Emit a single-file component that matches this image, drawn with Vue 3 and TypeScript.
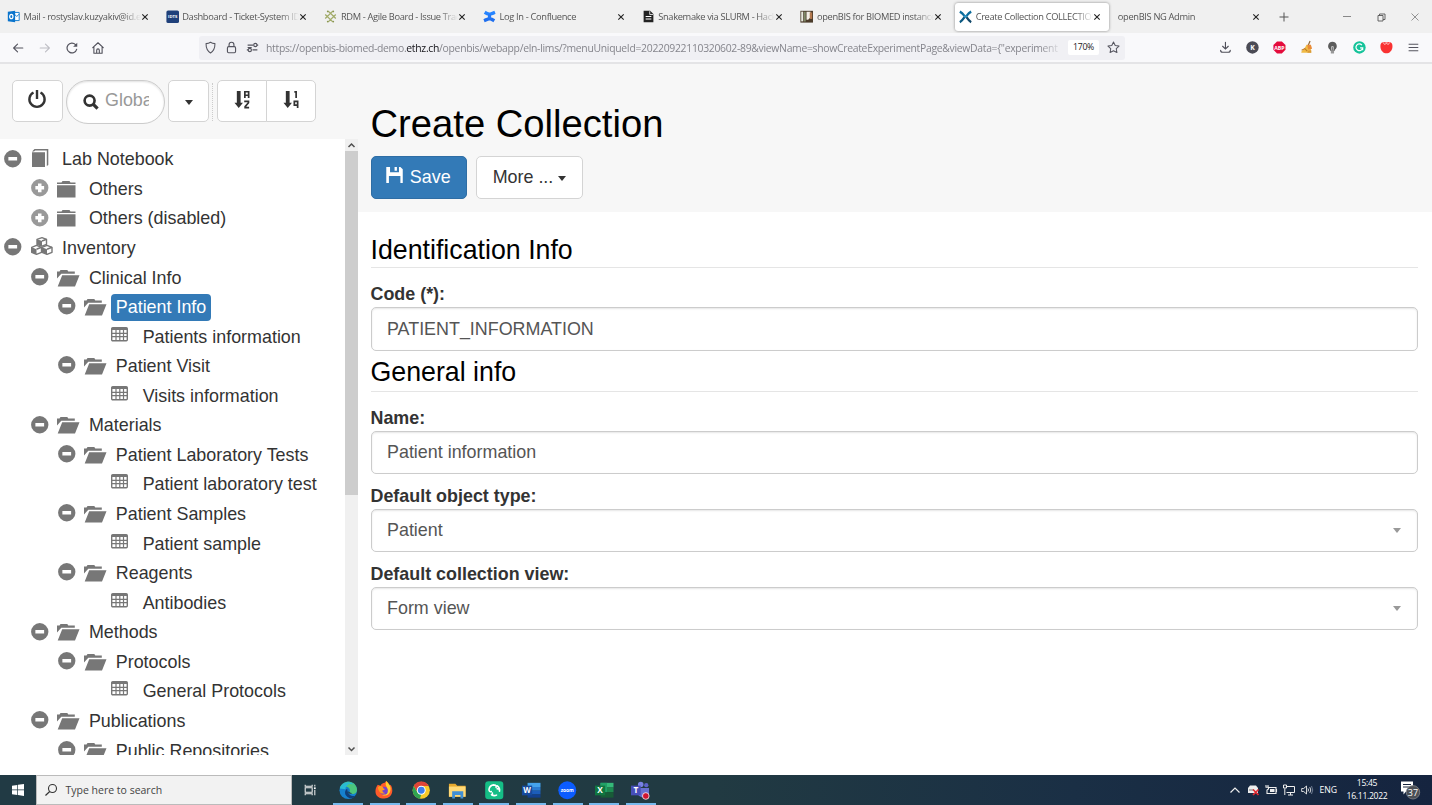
<script setup lang="ts">
interface Tab {
  title: string
  icon?: string
  active?: boolean
}

interface Node {
  label: string
  level: number
  toggle: 'minus' | 'plus' | ''
  icon: string
  selected?: boolean
}

const font = 'font-family="Open Sans" font-weight="700" text-anchor="middle"'

// Inner markup of each glyph, on the view box named with it.
const icons: Record<string, { box: string; body: string }> = {
  outlook: { box: '0 0 16 16', body: '<path d="M8 3h7v10H8z" fill="#fff" stroke="#1b7fd0" stroke-width="1.2"/><path d="M9 5l3 3 3-3" fill="none" stroke="#1b7fd0" stroke-width="1.2"/><path d="M1 2.3L10 1v14L1 13.7z" fill="#0a74cc"/><ellipse cx="5.3" cy="8" rx="2" ry="2.7" fill="none" stroke="#fff" stroke-width="1.5"/>' },
  idts: { box: '0 0 16 16', body: `<rect x=".5" y=".5" width="15.500" height="15.500" rx="2" fill="#1f407a"/><text x="8.300" y="10.300" ${font} font-size="5.200" fill="#fff">IDTS</text>` },
  rdm: { box: '0 0 16 16', body: '<g fill="none" stroke="#a1ab68" stroke-width="1.5"><path d="M8 4l4 4-4 4-4-4zM8 4L5.5 1.7M8 4l2.5-2.3M8 12l-2.5 2.3M8 12l2.5 2.3M4 8L1.5 5.5M4 8l-2.500 2.500M12 8l2.500-2.500M12 8l2.500 2.500"/></g><g fill="#8a9650"><circle cx="4.700" cy="1.700" r="1.200"/><circle cx="11.300" cy="1.700" r="1.200"/><circle cx="4.700" cy="14.300" r="1.200"/><circle cx="11.300" cy="14.300" r="1.200"/></g>' },
  confluence: { box: '0 0 16 16', body: '<path d="M1 4.500L3.200 1c3 2 4.500 2.500 6.300 1.700L14 1l1.500 3.500C9 8 5.500 7.500 1 4.500z" fill="#2684ff"/><path d="M15 11.500L12.800 15c-3-2-4.500-2.500-6.300-1.700L2 15 .5 11.500C7 8 10.500 8.500 15 11.500z" fill="#1f6fee"/><path d="M6 5.500h4v5H6z" fill="#2478f5"/>' },
  doc: { box: '0 0 16 16', body: '<path d="M2 1h8l4 4v10H2z" fill="#222"/><path d="M9.500 1.500V5.500h4" fill="none" stroke="#fff"/><path d="M4.500 8h7M4.500 11h7" stroke="#fff" stroke-width="1.300"/>' },
  photo: { box: '0 0 16 16', body: '<rect x=".5" y="1" width="15.500" height="14.500" fill="#4b3b2a"/><path d="M1.500 2H4v12H1.500z" fill="#e8eadf"/><path d="M5 2h2v12H5z" fill="#85906d"/><path d="M8 2h5v7l-3 3H8z" fill="#f3ede5"/><path d="M12 3h3v8h-3z" fill="#b3784e"/>' },
  openbis: { box: '0 0 16 16', body: '<g fill="none" stroke-width="2.800"><path d="M1 2c2 1 4 3 6 5.500M15 2c-2 1-4 3-6 5.500" stroke="#0f6e9d"/><path d="M1 15c2-1 4-3.500 6-6.500" stroke="#0c5a82"/><path d="M15 15c-2-1-4-3.500-6-6.500" stroke="#12496a"/></g><circle cx="8" cy="8" r="1.700" fill="#2894c5"/>' },
  close: { box: '0 0 8 8', body: '<path d="M1.300 1.300l5.400 5.400M6.700 1.300L1.300 6.700" stroke="#222" stroke-width="1.100"/>' },
  plusTab: { box: '0 0 10 10', body: '<path d="M5 .5v9M.5 5h9" stroke="#555"/>' },
  winMin: { box: '0 0 10 10', body: '<path d="M1 4.500h8" stroke="#888"/>' },
  winMax: { box: '0 0 10 10', body: '<path d="M2 3.500h5V9H2zM3.500 3.500V2H9v5.500H7" fill="none" stroke="#555" stroke-width=".9"/>' },
  winClose: { box: '0 0 10 10', body: '<path d="M1.500 1.500l7 7M8.500 1.500l-7 7" stroke="#888" stroke-width=".9"/>' },
  back: { box: '0 0 16 16', body: '<path d="M13.500 8H3M7.500 3.500L3 8l4.500 4.500" fill="none" stroke="#55555f" stroke-width="1.250" stroke-linecap="round" stroke-linejoin="round"/>' },
  forward: { box: '0 0 16 16', body: '<path d="M2.500 8H13M8.500 3.500L13 8l-4.500 4.500" fill="none" stroke="#bebec4" stroke-width="1.250" stroke-linecap="round" stroke-linejoin="round"/>' },
  reload: { box: '0 0 16 16', body: '<path d="M13.300 9.500A5.600 5.600 0 1 1 12 4.200" fill="none" stroke="#55555f" stroke-width="1.400" stroke-linecap="round"/><path d="M14 2v4.700H9.300z" fill="#55555f"/>' },
  home: { box: '0 0 16 16', body: '<path d="M2 7.500L8 2l6 5.500M3.300 6.800V14h9.400V6.800M6.500 14v-3.500a1.500 1.500 0 0 1 3 0V14" fill="none" stroke="#50505a" stroke-width="1.250" stroke-linecap="round" stroke-linejoin="round"/>' },
  shield: { box: '0 0 16 16', body: '<path d="M8 1.500c1.800 1.200 3.500 1.600 5.500 1.700C13.500 9 12 12.500 8 14.800 4 12.500 2.500 9 2.500 3.200 4.500 3.100 6.200 2.700 8 1.500z" fill="none" stroke="#55555f" stroke-width="1.300" stroke-linejoin="round"/>' },
  lock: { box: '0 0 16 16', body: '<rect x="3" y="7" width="10" height="7.500" rx="1.500" fill="none" stroke="#55555f" stroke-width="1.400"/><path d="M5 7V4.500a3 3 0 0 1 6 0V7" fill="none" stroke="#55555f" stroke-width="1.400"/>' },
  perms: { box: '0 0 16 16', body: '<g fill="none" stroke="#55555f" stroke-width="1.400"><path d="M2 5h7M8 11h6"/><circle cx="11.500" cy="5" r="2"/><circle cx="4.700" cy="11" r="2"/><path d="M13.500 5H15M1 11h1.500M2 8h5"/></g>' },
  star: { box: '0 0 16 16', body: '<path d="M8 1.200l2.100 4.300 4.700.7-3.400 3.300.8 4.700L8 12l-4.200 2.200.8-4.700L1.200 6.200l4.700-.7z" fill="none" stroke="#55555f" stroke-width="1.250" stroke-linejoin="round"/>' },
  download: { box: '0 0 16 16', body: '<path d="M8 1.500v8M4.500 6.500L8 10l3.500-3.500M2 11.500c0 2 .5 2.500 2.500 2.500h7c2 0 2.500-.5 2.500-2.500" fill="none" stroke="#50505a" stroke-width="1.400" stroke-linecap="round"/>' },
  kBadge: { box: '0 0 16 16', body: `<circle cx="8" cy="8" r="7.700" fill="#4b4b55"/><text x="8" y="11" ${font} font-size="8.500" fill="#fff">K</text>` },
  abp: { box: '0 0 16 16', body: `<path d="M5 .5h6L15.500 5v6L11 15.500H5L.5 11V5z" fill="#e40c3c"/><text x="8" y="10.600" ${font} font-size="6.500" fill="#fff">ABP</text>` },
  broom: { box: '0 0 16 16', body: '<path d="M12.500 0l-2.500 6" stroke="#8d6a3b" stroke-width="1.500"/><path d="M8 4.500l5 1.500 1 8.500H2c-2-1.500 3-3 6-10z" fill="#f0bb45"/><path d="M2 11.500l4-2 3 3" fill="none" stroke="#bd7827" stroke-width="1.300"/><path d="M9 4.500h4.500l1.500 5-5 1z" fill="#e98b38"/><path d="M10 12l4-.5v3h-5z" fill="#d99a3a"/>' },
  bulb: { box: '0 0 16 16', body: '<path d="M8 .8a5.500 5.500 0 0 1 3 10V12H5v-1.200a5.500 5.500 0 0 1 3-10z" fill="#5c5c5c"/><path d="M6 12h4v3.500H6z" fill="#999"/><path d="M7 11V7h2v4" fill="none" stroke="#ddd"/>' },
  grammarly: { box: '0 0 16 16', body: '<circle cx="8" cy="8" r="7.700" fill="#15c39a"/><path d="M11 5a4.200 4.200 0 1 0 1 3.500H8.800M12 8.500v3" fill="none" stroke="#fff" stroke-width="1.500"/>' },
  tomato: { box: '0 0 16 16', body: '<path d="M8 2c5-2 7.800.5 7.500 5-.3 5-4 8.300-7.500 8.300S.8 12 .5 7C.2 2.500 3 0 8 2z" fill="#f93232"/><path d="M3.500 1.500l2.500 3 2-2 2 2 2.500-3" fill="none" stroke="#ffd4d4" stroke-width="1.100"/>' },
  menu: { box: '0 0 16 16', body: '<path d="M2 4h12M2 8h12M2 12h12" stroke="#55555f" stroke-width="1.300"/>' },
  power: { box: '0 0 18 18', body: '<path d="M5.500 2.500A7.600 7.600 0 1 0 12.500 2.500" fill="none" stroke="#333" stroke-width="2.400"/><path d="M9 0v9" stroke="#333" stroke-width="2.400"/>' },
  search: { box: '0 0 17 17', body: '<circle cx="7" cy="7" r="5.300" fill="none" stroke="#333" stroke-width="2.800"/><path d="M11 11l4.500 4.500" stroke="#333" stroke-width="3.400"/>' },
  sortAz: { box: '0 0 18 20', body: '<path d="M3 1h4v12.500h2.500L5 19 .500 13.500H3z" fill="#333"/><path d="M11.500 8.500V1.800h4v6.700M11.500 5.500h4M10.800 12h4.500v1.500l-3.500 4v1h4.200" fill="none" stroke="#333" stroke-width="1.800"/>' },
  sortNum: { box: '0 0 18 20', body: '<path d="M3 1h4v12.500h2.500L5 19 .500 13.500H3z" fill="#333"/><path d="M12 1.900h1.900v6.600M15.500 19v-7h-3.500v4h3.500" fill="none" stroke="#333" stroke-width="1.800"/>' },
  minus: { box: '0 0 18 18', body: '<circle cx="9" cy="9" r="8.900" fill="#777"/><path d="M4.500 7.200h9v3.600h-9z" fill="#fff"/>' },
  plus: { box: '0 0 18 18', body: '<circle cx="9" cy="9" r="8.900" fill="#999"/><path d="M7.200 4.500h3.600v2.700h2.700v3.600h-2.700v2.700H7.200v-2.700H4.500V7.200h2.700z" fill="#fff"/>' },
  book: { box: '0 0 22 18', body: '<path d="M1 3.200h13V18H1zM1 2.500L3.500 0h13.800v16l-1.500 1V1.500H4.200L3 2.500z" fill="#777"/>' },
  cubes: { box: '0 0 22 18', body: '<g fill="#fff" stroke="#777" stroke-width="1.400" stroke-linejoin="round"><path d="M6 2.300L11 .7l4.500 1.600v5L11 9.200 6 7.300z"/><path d="M.7 10.300l4.800-1.900 5 1.900v5l-5 2-4.800-2z"/><path d="M11 10.300l5-1.900 5 1.900v5l-5 2-5-2z"/></g><path d="M6 2.300L11 4v5L6 7.200zM.7 10.300l4.800 1.900v5l-4.800-2zM11 10.300l5 1.900v5l-5-2z" fill="#777"/><path d="M11 4l4.500-1.700M5.500 12.200l5-1.900M16 12.200l5-1.900" stroke="#777" stroke-width="1.500"/>' },
  folder: { box: '0 0 22 18', body: '<path d="M0 5.300h18.500V17.500H0zM0 4V2.500h4.500l1-1.500h7l1 1.500h5V4z" fill="#777"/>' },
  open: { box: '0 0 22 18', body: '<path d="M0 9.500V2.500h2.500l1-1.500h6.800l1 1.500h6.500v2.300H4.300zM5.200 6.200h17.300L18 17.500H.7z" fill="#777"/>' },
  table: { box: '0 0 22 18', body: '<rect x=".7" y=".7" width="15.600" height="13" rx="1" fill="none" stroke="#777" stroke-width="1.400"/><path d="M1 1h15v2H1z" fill="#777"/><path d="M1 6.300h15M1 9.700h15M5 2v11.500M8.800 2v11.500M12.500 2v11.500" stroke="#777" stroke-width="1.200"/>' },
  save: { box: '0 0 18 17', body: '<path d="M0 0h4v5.500h9.500V0h1.500l2.500 2.500V17H15V9.500H2.800V17H0zM8.800 0h2.500v4H8.800z" fill="#fff"/>' },
  windows: { box: '0 0 14 14', body: '<path d="M1 2.700l5.300-.8v4.700H1zM7 1.800L13 1v5.600H7zM1 7.300h5.300V12L1 11.200zM7 7.300h6V13l-6-.9z" fill="#fff"/>' },
  glass: { box: '0 0 14 14', body: '<circle cx="8.500" cy="5.500" r="4" fill="none" stroke="#333" stroke-width="1.100"/><path d="M5.700 8.500L1.500 12.500" stroke="#333" stroke-width="1.200"/>' },
  taskview: { box: '0 0 16 16', body: '<path d="M2.500 5.500h8v5h-8zM2.500 2v1.700h8V2M2.500 14v-1.700h8V14" fill="none" stroke="#eee" stroke-width="1.200"/><path d="M13.500 2v2M13.500 8v6" stroke="#eee" stroke-width="1.200"/><path d="M12.500 5h2v2h-2z" fill="#fff"/>' },
  edge: { box: '0 0 20 20', body: '<circle cx="10" cy="10" r="9.500" fill="#1681ce"/><path d="M1 8C3-1 17-2 19.300 8c.7 4-1.500 6-5 6-2 0-3-.8-3-1.500C14 8 8 3 1 8z" fill="#4cc67b"/><path d="M1 8c2-6 10-9 15-4-4-2-9 0-9 5z" fill="#29b9d5"/><path d="M9 8c-5 3-2 11 5 10.500 2-.3 3-1.300 4-2.500-3 1-9 0-9-8z" fill="#103f79"/><path d="M10.500 8.500c-1 2 .5 5 4 4.500-1 1-3 1-4.500 0z" fill="#213a44"/>' },
  firefox: { box: '0 0 20 20', body: '<path d="M3 4l3 1c1-2 3-3 4.500-3L12 0c3 2 3.500 4 4 5l1-1c3 5 3 14-7 15C-1 19-1 9 3 4z" fill="#ff5a2a"/><path d="M12 0c4 4 6 7 4.500 11-1 4-5 6-9 4 9-1 5-9 4-11z" fill="#ffd02e"/><circle cx="9.700" cy="10.500" r="4.200" fill="#7542cf"/><path d="M3 7c3-3 6-1 6 1 2 0 2 2-1 2 0 2 1 3 3 3-4 2-7-1-8-6z" fill="#ff9a20"/>' },
  chrome: { box: '0 0 20 20', body: '<circle cx="10" cy="10" r="9.300" fill="#f8ca29"/><path d="M1.900 5.400A9.300 9.300 0 0 1 18.100 5.400H10L6 12.300z" fill="#df4538"/><path d="M1.900 5.400L6 12.300l4 2.300-1.500 4.600A9.300 9.300 0 0 1 1.900 5.400z" fill="#2fa451"/><circle cx="10" cy="10" r="4.800" fill="#fff"/><circle cx="10" cy="10" r="3.700" fill="#3d7fed"/>' },
  files: { box: '0 0 20 20', body: '<path d="M1 3h7l2 2h9v12H1z" fill="#e6a92e"/><path d="M1 6h18v11H1z" fill="#ffd977"/><path d="M4.500 11h12v8h-3v-4h-6v4h-3z" fill="#418fd4"/>' },
  sync: { box: '0 0 20 20', body: '<rect x=".2" y=".2" width="19.600" height="19.600" rx="3.500" fill="#15bd86"/><path d="M9.500 4.200A5.900 5.900 0 0 0 4.300 9M7 14.900A5.900 5.900 0 0 0 12.500 15.300M15.700 11A5.900 5.900 0 0 0 13 5.100M4.300 9q0 3 2.500 2.500M9.500 4.200q3 0 2.500 2.800M15.700 11q0-3-2.500-2.500M10.500 15.800q-3 0-2.500-2.800" fill="none" stroke="#fff" stroke-width="1.700" stroke-linecap="round"/>' },
  word: { box: '0 0 20 20', body: `<path d="M6 2h14v4.500H6z" fill="#45a3ed"/><path d="M6 6.500h14v4H6z" fill="#2b7cd3"/><path d="M6 10.500h14v4H6z" fill="#1c5dbb"/><path d="M6 14.500h14V18H6z" fill="#12408f"/><rect y="5" width="11" height="10.500" fill="#164a9d"/><text x="5.500" y="13.200" ${font} font-size="8.500" fill="#fff">W</text>` },
  zoom: { box: '0 0 20 20', body: `<circle cx="10" cy="10" r="9.700" fill="#0b5cff"/><text x="10" y="11.800" ${font} font-size="5.200" fill="#fff">zoom</text>` },
  excel: { box: '0 0 20 20', body: `<path d="M6 2h14v5H6z" fill="#35b979"/><path d="M6 7h14v5H6z" fill="#1d8a50"/><path d="M6 12h14v6H6z" fill="#185c37"/><path d="M6 2h7v10H6z" fill="#20a166"/><rect y="5" width="11" height="10.500" fill="#107640"/><text x="5.500" y="13.200" ${font} font-size="9" fill="#fff">X</text>` },
  teams: { box: '0 0 20 20', body: `<circle cx="10.500" cy="3.700" r="3" fill="#7881e5"/><circle cx="16.500" cy="4.500" r="2.300" fill="#5c63cb"/><path d="M7 7.500h12.500v6c0 3-2 4.500-5 4.500S8 16 7 14z" fill="#6870d2"/><rect y="5" width="10.500" height="10.500" fill="#464eb8"/><text x="5.300" y="13.300" ${font} font-size="9" fill="#fff">T</text><circle cx="16" cy="16.200" r="3.600" fill="#cf1530" stroke="#fff" stroke-width=".8"/>` },
  chevron: { box: '0 0 12 12', body: '<path d="M1.500 8.500L6 4l4.500 4.500" fill="none" stroke="#eee" stroke-width="1.200"/>' },
  drive: { box: '0 0 12 12', body: '<path d="M1 4l2-2.500h6L11 4v5H1z" fill="#eee"/><path d="M2 6h5" stroke="#777"/><path d="M6 5.500l5.500 5.500M11.500 5.500L6 11" stroke="#e32b31" stroke-width="1.700"/>' },
  battery: { box: '0 0 12 12', body: '<path d="M3.500 3.500H11v6H2V7M11.500 5v3M1 1v2M3 1v2M.5 3.300h3V5L2 6v2" fill="none" stroke="#eee" stroke-width="1.100"/><path d="M5 5h4.500v3H5z" fill="#eee"/>' },
  network: { box: '0 0 12 12', body: '<path d="M3.500 2.500h8v6h-8M7.500 8.500V11M5 11h5M1.800 4.500V11M.5 1h3v3H.5z" fill="none" stroke="#eee"/>' },
  sound: { box: '0 0 12 12', body: '<path d="M.7 4.500h2L5.500 2v8L2.700 7.500h-2z" fill="none" stroke="#eee" stroke-width=".9"/><path d="M7 4.500q1 1.500 0 3M8.800 3.200q2 2.800 0 5.600" fill="none" stroke="#eee" stroke-width=".9"/><path d="M10.500 2q2.500 4 0 8" fill="none" stroke="#78849a" stroke-width=".9"/>' },
  notify: { box: '0 0 20 20', body: `<path d="M1 1.500h12v10H6l-2.500 3v-3H1z" fill="#fff"/><path d="M3 4.500h8M3 7h8" stroke="#16243e"/><circle cx="13" cy="12.300" r="6.700" fill="#4b4f55" stroke="#8c8f94" stroke-width=".7"/><text x="13" y="15.500" font-family="Open Sans" text-anchor="middle" font-size="9" fill="#fff">37</text>` },
}

const tabs: Tab[] = [
  { title: 'Mail - rostyslav.kuzyakiv@id.e', icon: 'outlook' },
  { title: 'Dashboard - Ticket-System ID', icon: 'idts' },
  { title: 'RDM - Agile Board - Issue Trac', icon: 'rdm' },
  { title: 'Log In - Confluence', icon: 'confluence' },
  { title: 'Snakemake via SLURM - Hack', icon: 'doc' },
  { title: 'openBIS for BIOMED instance', icon: 'photo' },
  { title: 'Create Collection COLLECTION', icon: 'openbis', active: true },
  { title: 'openBIS NG Admin' },
]

const node = (level: number, label: string, icon = 'open', toggle: Node['toggle'] = 'minus'): Node => ({ level, label, icon, toggle })
const leaf = (label: string): Node => node(3, label, 'table', '')

const tree: Node[] = [
  node(0, 'Lab Notebook', 'book'),
  node(1, 'Others', 'folder', 'plus'),
  node(1, 'Others (disabled)', 'folder', 'plus'),
  node(0, 'Inventory', 'cubes'),
  node(1, 'Clinical Info'),
  { ...node(2, 'Patient Info'), selected: true },
  leaf('Patients information'),
  node(2, 'Patient Visit'),
  leaf('Visits information'),
  node(1, 'Materials'),
  node(2, 'Patient Laboratory Tests'),
  leaf('Patient laboratory test'),
  node(2, 'Patient Samples'),
  leaf('Patient sample'),
  node(2, 'Reagents'),
  leaf('Antibodies'),
  node(1, 'Methods'),
  node(2, 'Protocols'),
  leaf('General Protocols'),
  node(1, 'Publications'),
  node(2, 'Public Repositories'),
]

const extensions = ['download', 'kBadge', 'abp', 'broom', 'bulb', 'grammarly', 'tomato', 'menu']
const apps = ['edge', 'firefox', 'chrome', 'files', 'sync', 'word', 'zoom', 'excel', 'teams']
const tray = ['chevron', 'drive', 'battery', 'network', 'sound']
</script>

<template>
  <div class="screen">
    <header class="tabs">
      <div v-for="t in tabs" :key="t.title" class="tab" :class="{ active: t.active }">
        <svg v-if="t.icon" class="fav" :viewBox="icons[t.icon].box" v-html="icons[t.icon].body" />
        <span class="title">{{ t.title }}</span>
        <svg class="x" :viewBox="icons.close.box" v-html="icons.close.body" />
      </div>
      <svg class="newtab" :viewBox="icons.plusTab.box" v-html="icons.plusTab.body" />
      <div class="wincontrols">
        <svg v-for="w in ['winMin', 'winMax', 'winClose']" :key="w" :viewBox="icons[w].box" v-html="icons[w].body" />
      </div>
    </header>

    <nav class="toolbar">
      <div class="navbtns">
        <svg v-for="n in ['back', 'forward', 'reload', 'home']" :key="n" :viewBox="icons[n].box" v-html="icons[n].body" />
      </div>
      <div class="urlbar">
        <svg v-for="n in ['shield', 'lock', 'perms']" :key="n" :viewBox="icons[n].box" v-html="icons[n].body" />
        <span class="url">https://openbis-biomed-demo.<b>ethz.ch</b>/openbis/webapp/eln-lims/?menuUniqueId=20220922110320602-89&amp;viewName=showCreateExperimentPage&amp;viewData={"experiment</span>
        <span class="pct">170%</span>
        <svg class="fave" :viewBox="icons.star.box" v-html="icons.star.body" />
      </div>
      <div class="exts">
        <svg v-for="n in extensions" :key="n" :viewBox="icons[n].box" v-html="icons[n].body" />
      </div>
    </nav>

    <div class="page">
      <aside class="side">
        <div class="tools">
          <button class="btn power"><svg :viewBox="icons.power.box" v-html="icons.power.body" /></button>
          <div class="pill">
            <svg :viewBox="icons.search.box" v-html="icons.search.body" />
            <span>Global</span>
          </div>
          <button class="btn drop"><i class="caret" /></button>
          <i class="dots" />
          <div class="group">
            <button class="btn"><svg :viewBox="icons.sortAz.box" v-html="icons.sortAz.body" /></button>
            <button class="btn"><svg :viewBox="icons.sortNum.box" v-html="icons.sortNum.body" /></button>
          </div>
        </div>
        <div class="treewrap">
          <ul class="tree">
            <li v-for="n in tree" :key="n.label" :style="{ paddingLeft: 4 + n.level * 26.85 + 'px' }">
              <svg v-if="n.toggle" class="toggle" :viewBox="icons[n.toggle].box" v-html="icons[n.toggle].body" />
              <svg class="kind" :class="[n.icon, { bare: !n.toggle }]" :viewBox="icons[n.icon].box" v-html="icons[n.icon].body" />
              <span class="label" :class="{ selected: n.selected }">{{ n.label }}</span>
            </li>
          </ul>
          <div class="scroll">
            <svg viewBox="0 0 13 12"><path d="M3.500 8L6.500 5l3 3" fill="none" stroke="#505050" stroke-width="1.500" /></svg>
            <i class="thumb" />
            <svg viewBox="0 0 13 12"><path d="M3.500 4.500l3 3 3-3" fill="none" stroke="#505050" stroke-width="1.500" /></svg>
          </div>
        </div>
      </aside>

      <main class="main">
        <section class="head">
          <h1>Create Collection</h1>
          <div class="actions">
            <button class="btn save"><svg :viewBox="icons.save.box" v-html="icons.save.body" /><span>Save</span></button>
            <button class="btn more"><span>More ...</span><i class="caret" /></button>
          </div>
        </section>
        <section class="form">
          <h2 class="first">Identification Info</h2>
          <label class="tall">Code (*):</label>
          <div class="field">PATIENT_INFORMATION</div>
          <h2>General info</h2>
          <label class="tall">Name:</label>
          <div class="field">Patient information</div>
          <label>Default object type:</label>
          <div class="field">Patient<i class="caret" /></div>
          <label>Default collection view:</label>
          <div class="field">Form view<i class="caret" /></div>
        </section>
      </main>
    </div>

    <footer class="taskbar">
      <div class="start"><svg :viewBox="icons.windows.box" v-html="icons.windows.body" /></div>
      <div class="find">
        <svg :viewBox="icons.glass.box" v-html="icons.glass.body" />
        <span>Type here to search</span>
      </div>
      <div class="tview"><svg :viewBox="icons.taskview.box" v-html="icons.taskview.body" /></div>
      <div class="apps">
        <div v-for="a in apps" :key="a" class="app"><svg :viewBox="icons[a].box" v-html="icons[a].body" /></div>
      </div>
      <div class="tray">
        <svg v-for="t in tray" :key="t" :viewBox="icons[t].box" v-html="icons[t].body" />
      </div>
      <span class="lang">ENG</span>
      <div class="clock"><span>15:45</span><span>16.11.2022</span></div>
      <svg class="notify" :viewBox="icons.notify.box" v-html="icons.notify.body" />
    </footer>
  </div>
</template>

<style>
body {
  margin: 0;
  overflow: hidden;
}
</style>

<style scoped>
* {
  box-sizing: border-box;
}
svg {
  display: block;
  flex: none;
  overflow: visible;
}
.screen {
  width: 1432px;
  height: 805px;
  display: flex;
  flex-direction: column;
  background: #fff;
  font-family: "Liberation Sans", Arial, sans-serif;
  font-size: 17.900px;
  color: #333;
}
.tabs {
  height: 33px;
  flex: none;
  display: flex;
  align-items: center;
  background: #f0f0f0;
  padding-left: 0.500px;
  font-family: "Open Sans", "Noto Sans", sans-serif;
  font-size: 9.300px;
}
.tab {
  width: 154.700px;
  height: 28px;
  margin: 0 2px;
  flex: none;
  display: flex;
  align-items: center;
  padding-left: 4.500px;
  color: #555;
  border-radius: 3px;
}
.tab.active {
  background: #fff;
  box-shadow: 0 0 3px rgba(0, 0, 0, 0.45);
}
.fav {
  width: 13px;
  height: 13px;
  margin-right: 3.500px;
}
.title {
  flex: 1;
  overflow: hidden;
  white-space: nowrap;
  letter-spacing: -0.340px;
  mask-image: linear-gradient(90deg, #000 84%, transparent 100%);
}
.x {
  width: 8px;
  height: 8px;
  margin: 0 8.500px 0 0;
}
.newtab {
  width: 10px;
  height: 10px;
  margin-left: 8.500px;
}
.wincontrols {
  margin-left: auto;
  display: flex;
  gap: 24px;
  padding-right: 12.500px;
}
.wincontrols svg {
  width: 10px;
  height: 10px;
}
.toolbar {
  height: 31px;
  flex: none;
  display: flex;
  align-items: center;
  background: #f9f9fb;
  border-bottom: 2px solid #e4e4e6;
  font-family: "Open Sans", "Noto Sans", sans-serif;
}
.navbtns {
  display: flex;
  gap: 12.800px;
  width: 199px;
  padding: 1px 0 0 11px;
}
.navbtns svg {
  width: 14px;
  height: 14px;
}
.urlbar {
  width: 926px;
  height: 24px;
  background: #f0f0f4;
  border-radius: 3px;
  display: flex;
  align-items: center;
  gap: 8px;
  padding-left: 5px;
}
.urlbar svg {
  width: 13px;
  height: 13px;
}
.url {
  width: 797px;
  margin-left: -1px;
  overflow: hidden;
  white-space: nowrap;
  font-size: 10.400px;
  letter-spacing: -0.300px;
  color: #85858c;
  mask-image: linear-gradient(90deg, #000 97%, transparent 100%);
}
.url b {
  font-weight: 400;
  color: #15141a;
}
.pct {
  width: 31px;
  height: 15px;
  line-height: 15px;
  text-align: center;
  background: #fff;
  border-radius: 2px;
  font-size: 8.700px;
  letter-spacing: -0.300px;
  color: #222;
  margin-left: -3px;
}
.exts {
  margin-left: auto;
  display: flex;
  align-items: center;
  gap: 14px;
  padding-right: 12px;
}
.exts svg {
  width: 12.900px;
  height: 12.900px;
}
.page {
  flex: 1;
  min-height: 0;
  display: flex;
}
.side {
  width: 358px;
  display: flex;
  flex-direction: column;
}
.tools {
  height: 75px;
  flex: none;
  background: #f7f7f7;
  display: flex;
  align-items: flex-start;
  padding: 15.500px 0 0 12px;
}
.btn {
  height: 42.500px;
  margin: 0;
  padding: 0;
  font: inherit;
  color: #333;
  background: #fff;
  border: 1px solid #d4d4d4;
  border-radius: 5px;
  display: flex;
  align-items: center;
  justify-content: center;
}
.power {
  width: 50.500px;
}
.power svg {
  width: 18px;
  height: 18px;
  margin-top: -3px;
}
.pill {
  width: 99.500px;
  height: 44px;
  margin: 0 3px;
  background: #fff;
  border: 1px solid #ccc;
  border-radius: 22px;
  box-shadow: inset 0 1px 2px rgba(0, 0, 0, 0.12);
  display: flex;
  align-items: center;
  padding: 0 15.500px 3px 16px;
  color: #999;
}
.pill svg {
  width: 16px;
  height: 16px;
  margin: 3px 6.500px 0 0;
}
.pill span {
  overflow: hidden;
  white-space: nowrap;
}
.drop {
  width: 41px;
}
.drop .caret {
  margin-top: 3px;
}
.dots {
  height: 38px;
  margin: 3px 4px 0 3px;
  border-left: 1px dotted #ccc;
}
.group {
  display: flex;
}
.group .btn {
  width: 50px;
}
.group .btn:first-child {
  border-radius: 5px 0 0 5px;
}
.group .btn:last-child {
  border-radius: 0 5px 5px 0;
  margin-left: -1px;
}
.group svg {
  width: 17px;
  height: 19px;
  margin-top: -3px;
}
.caret {
  display: block;
  width: 0;
  border: solid transparent;
  border-width: 5px 4.500px 0;
  border-top-color: #333;
}
.treewrap {
  height: 616px;
  display: flex;
  overflow: hidden;
}
.tree {
  flex: 1;
  list-style: none;
  margin: 0;
  padding: 6px 0 0;
  height: 616px;
  overflow: hidden;
}
.tree li {
  height: 29.570px;
  display: flex;
  align-items: center;
  white-space: nowrap;
}
.toggle {
  width: 17.500px;
  height: 17.500px;
  margin: -3px 9px 0 0;
}
.kind {
  width: 22px;
  height: 18px;
  margin: -1px 4.600px 0 0;
}
.kind.bare {
  margin: -3px 4.600px 0 26.500px;
}
.kind.book {
  margin-top: -3px;
}
.kind.cubes {
  margin-top: -4px;
}
.label {
  height: 27px;
  line-height: 27.500px;
  padding: 0 5px;
  border-radius: 4px;
}
.label.selected {
  background: #337ab7;
  color: #fff;
}
.scroll {
  width: 13px;
  background: #f0f0f0;
  display: flex;
  flex-direction: column;
}
.scroll svg {
  width: 13px;
  height: 12px;
}
.scroll svg:last-child {
  margin-top: auto;
}
.thumb {
  height: 344px;
  background: #cdcdcd;
}
.main {
  flex: 1;
}
.head {
  height: 147.500px;
  background: #f7f7f7;
  padding: 37.500px 0 0 12.500px;
}
h1 {
  margin: 0;
  font-size: 38.200px;
  line-height: 44px;
  font-weight: 400;
  color: #000;
}
.actions {
  display: flex;
  gap: 9.500px;
  margin-top: 10.500px;
}
.save {
  width: 96px;
  background: #337ab7;
  border-color: #2e6da4;
  color: #fff;
}
.save span,
.more span {
  padding-top: 1px;
}
.save svg {
  width: 17.500px;
  height: 16px;
  margin: -4px 6px 0 0;
}
.more {
  width: 107px;
  gap: 5px;
}
.more .caret {
  margin-top: 3px;
}
.form {
  padding: 0 14px 0 12.500px;
}
h2 {
  height: 41px;
  margin: 0;
  line-height: 43px;
  font-size: 26.750px;
  font-weight: 400;
  color: #000;
  border-bottom: 1px solid #e5e5e5;
}
h2.first {
  height: 56.500px;
  line-height: 76px;
}
label {
  display: block;
  height: 34.500px;
  line-height: 44px;
  font-weight: 700;
}
label.tall {
  height: 39px;
  line-height: 53px;
}
.field {
  height: 43.500px;
  display: flex;
  align-items: center;
  justify-content: space-between;
  padding: 1px 16px 0 15.500px;
  border: 1px solid #ccc;
  border-radius: 5px;
  box-shadow: inset 0 1px 2px rgba(0, 0, 0, 0.1);
  color: #555;
}
.field .caret {
  border-top-color: #999;
}
.taskbar {
  height: 30px;
  flex: none;
  display: flex;
  align-items: center;
  background: linear-gradient(90deg, #213a44 0%, #213a42 50%, #1a2f45 75%, #15243f 100%);
  font-family: "Open Sans", "Noto Sans", sans-serif;
  color: #fff;
}
.start {
  width: 36px;
  padding-left: 11px;
}
.start svg {
  width: 14px;
  height: 14px;
}
.find {
  width: 256px;
  height: 30px;
  background: #f2f2f2;
  border: 1px solid #bbb;
  display: flex;
  align-items: center;
  padding-left: 7px;
  color: #444;
  font-size: 10.500px;
}
.find svg {
  width: 14px;
  height: 14px;
  margin-right: 7.500px;
}
.tview {
  width: 41px;
  padding-left: 11px;
}
.tview svg {
  width: 14px;
  height: 14px;
}
.apps {
  display: flex;
  gap: 6.600px;
}
.app {
  width: 30px;
  height: 30px;
  border-bottom: 2px solid #76b9ed;
  padding: 5.500px 0 0 5.700px;
}
.app svg {
  width: 18.500px;
  height: 18.500px;
}
.tray {
  margin-left: auto;
  display: flex;
  gap: 6px;
}
.tray svg {
  width: 12px;
  height: 12px;
}
.lang {
  font-size: 8.700px;
  width: 18px;
  margin: 0 8.500px 0 7px;
}
.clock {
  width: 42px;
  display: flex;
  flex-direction: column;
  align-items: center;
  font-size: 8.600px;
  line-height: 13px;
  letter-spacing: -0.300px;
  white-space: nowrap;
  padding-bottom: 1px;
}
.notify {
  width: 20px;
  height: 20px;
  margin: 0 12px 0 12px;
}
</style>
